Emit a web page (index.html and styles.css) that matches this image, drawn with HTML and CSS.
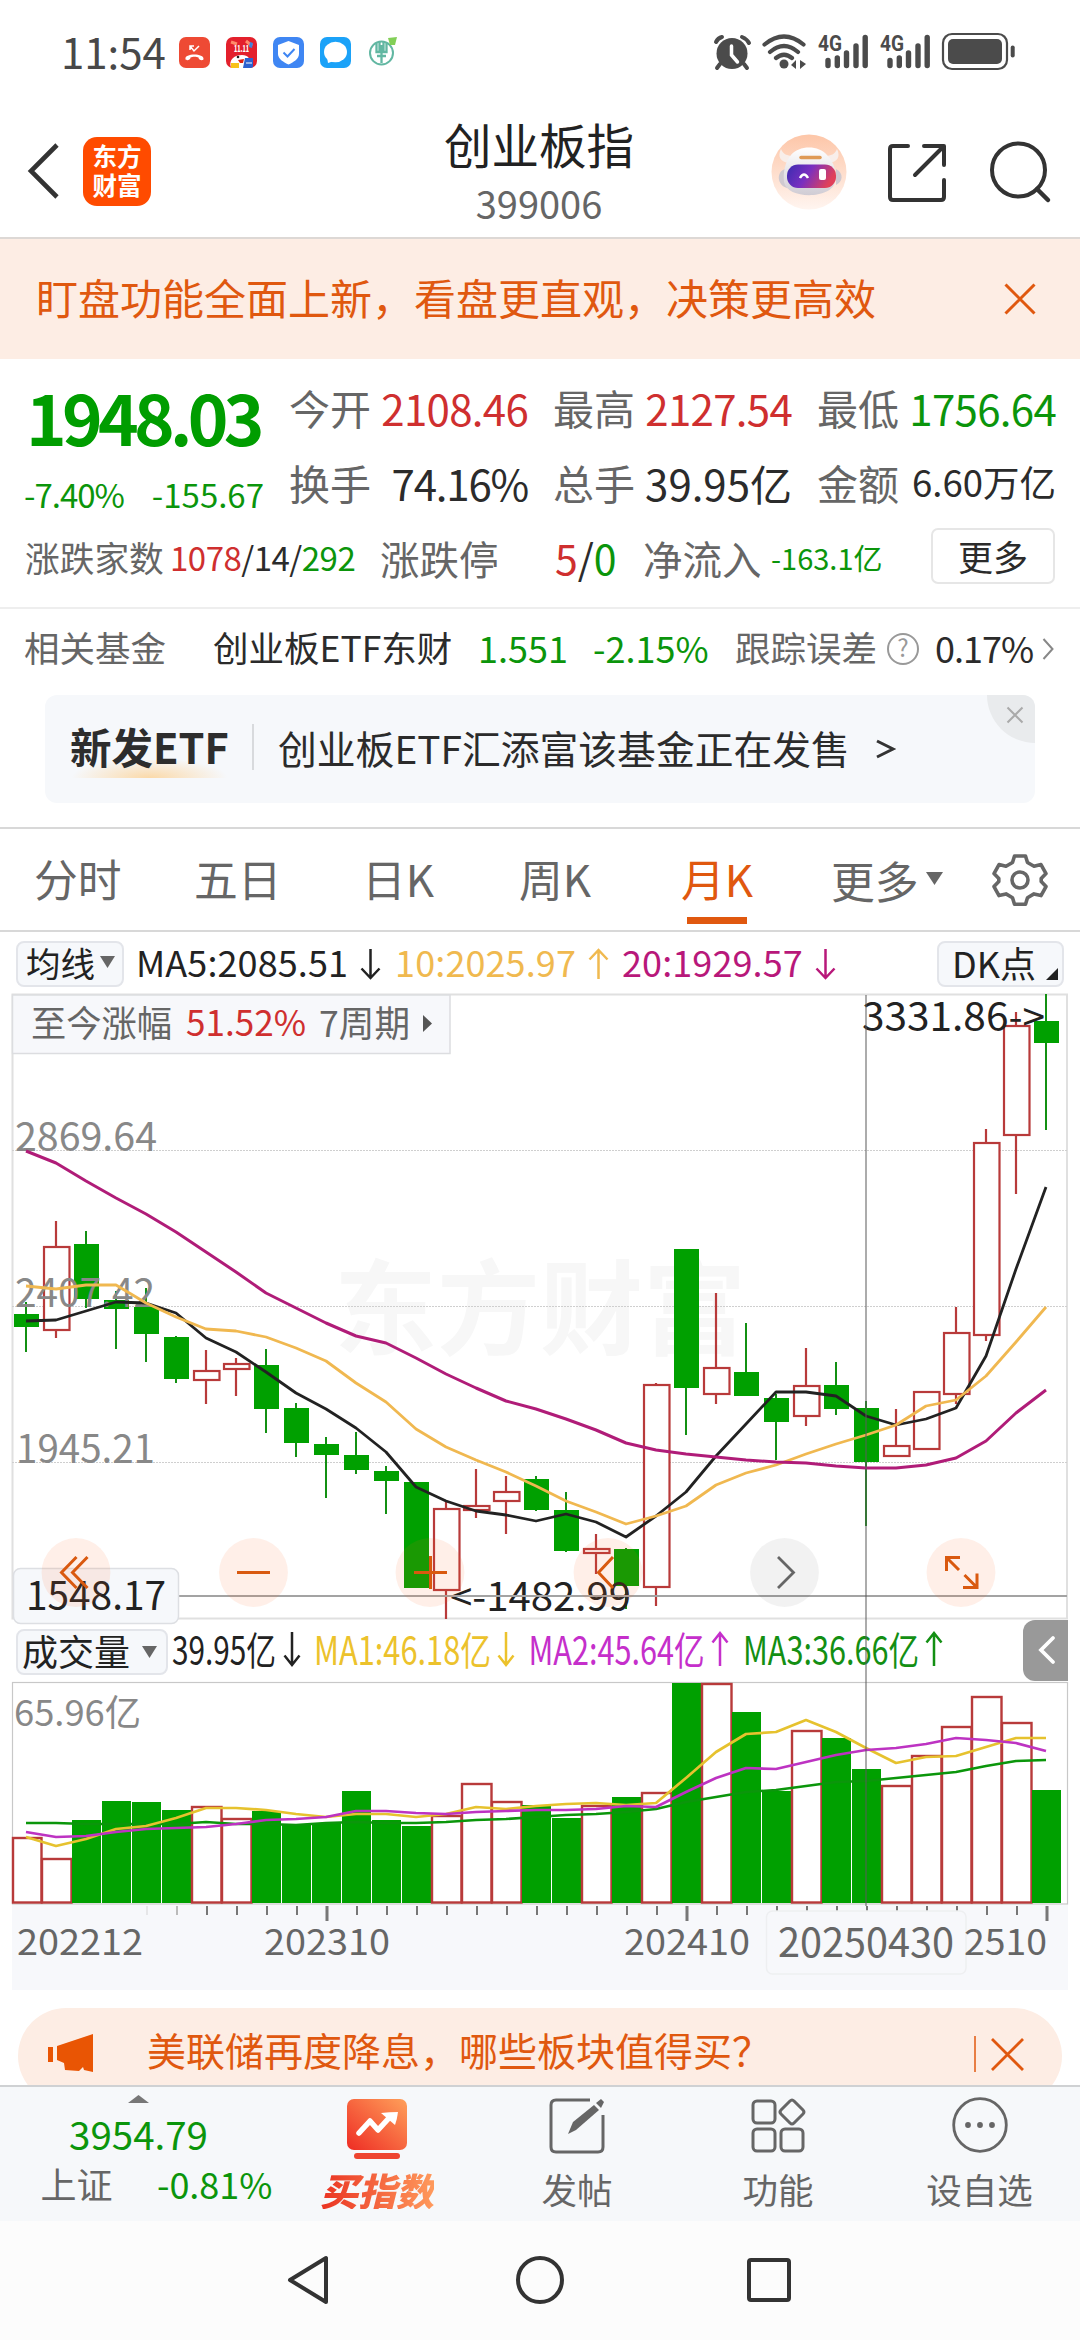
FILE: index.html
```html
<!DOCTYPE html>
<html lang="zh-CN">
<head>
<meta charset="utf-8">
<title>创业板指 399006</title>
<link rel="stylesheet" href="styles.css">
</head>
<body>
<div class="phone">
  <div class="statusbar">
    <span class="clock">11:54</span>
    <div class="apps">
      <svg width="31" height="31" viewBox="0 0 31 31"><rect width="31" height="31" rx="7" fill="#ee4a34"/><path d="M6.500 22c-1.500-6 19-6 18 0 0 2-5 1.500-5-1.500-2-1-6-1-8 0 0 3-5 3.500-5 1.500z" fill="#fff"/><path d="M11 13V9h4M11 9l4 5 5-5" fill="none" stroke="#fff" stroke-width="1.500"/></svg>
      <svg width="31" height="31" viewBox="0 0 31 31"><rect width="31" height="31" rx="7" fill="#e3202c"/><path d="M5 5l6 2M20 4l6 5" stroke="#ff8a6a" stroke-width="3"/><path d="M5 31c-3-9 4-13 11-13 6 0 9 3 8 13z" fill="#fff"/><text class="tiny" x="8" y="15" textLength="15" lengthAdjust="spacingAndGlyphs">11.11</text><path d="M24 5l3 1-1 5-3-1z" fill="#3f82dd"/><circle cx="12" cy="20" r="1.300" fill="#222"/><path d="M12 23l6-1-1 4h-3z" fill="#d21"/><path d="M5 26h8v5H5z" fill="#f8c21a"/><path d="M19 21h8v9l-2 1h-8z" fill="#2c62cf"/><path d="M20 26h6" stroke="#fff"/></svg>
      <svg width="31" height="31" viewBox="0 0 31 31"><rect width="31" height="31" rx="7" fill="#3f86f3"/><path d="M15.500 4L26 8v9c0 5-6 8.500-10.500 10.500C11 25.500 5 22 5 17V8z" fill="#fff"/><path d="M10.500 15.500l4 4 7-7.500" fill="none" stroke="#3f86f3" stroke-width="2"/></svg>
      <svg width="31" height="31" viewBox="0 0 31 31"><rect width="31" height="31" rx="7" fill="#1ba2f8"/><ellipse cx="15.500" cy="15" rx="11.500" ry="10.300" fill="#fff"/><path d="M7 20l1 6 6-2z" fill="#fff"/></svg>
      <svg width="31" height="31" viewBox="0 0 31 31"><circle cx="14.500" cy="16" r="11.500" fill="none" stroke="#62b7a2" stroke-width="2"/><path d="M9.500 6v9h3V5M19.500 6v9h-3V5M14.500 8v18M10 19h9" fill="none" stroke="#62b7a2" stroke-width="2.300"/><path d="M21 1l9-1-2 8-5 0z" fill="#82cf57"/></svg>
    </div>
    <svg class="sys" width="304" height="40" viewBox="712 32 304 40">
      <g fill="#4b4b4b"><circle cx="732" cy="53.500" r="15.500"/><path d="M720 64l-3 4M744 64l3 4M716 42q2-4 6-5M742 37q5 2 7 6" stroke="#4b4b4b" stroke-width="4" stroke-linecap="round" fill="none"/><path d="M731.500 46v9l6 7" stroke="#fff" stroke-width="3.500" stroke-linecap="round" fill="none"/></g>
      <g fill="none" stroke="#4b4b4b" stroke-width="4.200" stroke-linecap="round"><path d="M764.500 44.500q19.500-16 39 0M770 52q14-12 28 0M776 58q8-6.500 16 0"/></g>
      <circle cx="784" cy="64" r="4.500" fill="#4b4b4b"/><path d="M791 65l5-5v9M800 60v9l6-5z" fill="#4b4b4b"/>
      <text class="net" x="818" y="51" textLength="24" lengthAdjust="spacingAndGlyphs">4G</text>
      <text class="net" x="880" y="51" textLength="24" lengthAdjust="spacingAndGlyphs">4G</text>
      <g stroke="#4b4b4b" stroke-width="5.400" stroke-linecap="round"><path d="M828 60.500v5M837.300 58v7.500M846.500 53v12.500M856 46v19.500M865.200 37.500v28"/><path d="M890 60.500v5M899.300 58v7.500M908.500 53v12.500M918 46v19.500M927.200 37.500v28"/></g>
      <rect x="943" y="34" width="64" height="35" rx="9" fill="none" stroke="#4b4b4b" stroke-width="2.200"/><rect x="948" y="39" width="54" height="25" rx="5" fill="#4b4b4b"/><path d="M1012.700 47.500v8" stroke="#4b4b4b" stroke-width="4" stroke-linecap="round"/>
    </svg>
  </div>

  <header class="header">
    <div class="left">
      <svg width="32" height="56" viewBox="0 0 32 56"><path d="M29 2L3 28l26 26" fill="none" stroke="#333" stroke-width="4.600"/></svg>
      <div class="logo"><span>东方</span><span>财富</span></div>
    </div>
    <div class="heading"><h1>创业板指</h1><p>399006</p></div>
    <div class="tools">
      <svg width="76" height="76" viewBox="0 0 76 76">
        <defs><linearGradient id="halo" x2="0" y2="1"><stop stop-color="#fdc6a8"/><stop offset="1" stop-color="#fff5f0"/></linearGradient><linearGradient id="visor" x2="1" y2=".3"><stop stop-color="#3a2bb0"/><stop offset=".5" stop-color="#7a2fc0"/><stop offset="1" stop-color="#e0405a"/></linearGradient><linearGradient id="shell" x2="0" y2="1"><stop stop-color="#fff"/><stop offset="1" stop-color="#d0ccd4"/></linearGradient></defs>
        <circle cx="38" cy="38" r="37.500" fill="url(#halo)"/>
        <path d="M10 15c-4 8 0 13 8 14l4-7c-6 0-10-2-12-7zM66 15c4 8 0 13-8 14l-4-7c6 0 10-2 12-7z" fill="#f8eeea"/>
        <path d="M14 35c-9 3-8 16 2 19zM65 35c8 4 7 13 0 16z" fill="#cfc9d0"/>
        <path d="M20 21c8-10 28-10 36 0 7 7 10 17 8 27-3 17-48 18-51 0-1-10 1-20 7-27z" fill="url(#shell)"/>
        <rect x="16" y="30.500" width="49" height="23.500" rx="11" fill="url(#visor)"/>
        <path d="M29 44q4-7 8 0" fill="none" stroke="#fff" stroke-width="2.500"/><rect x="48" y="35" width="7" height="11" rx="2" fill="#fff"/><path d="M30 23.500h19" stroke="#df9a56" stroke-width="3.500" stroke-linecap="round" fill="none"/>
      </svg>
      <svg class="share" width="60" height="60" viewBox="0 0 60 60"><path d="M21 3H6Q3 3 3 6v48q0 3 3 3h48q3 0 3-3V37M37 3h20v19M56 4L28 32" fill="none" stroke="#333" stroke-width="4" stroke-linecap="round" stroke-linejoin="round"/></svg>
      <svg width="62" height="62" viewBox="0 0 62 62"><circle cx="28.500" cy="29" r="26.500" fill="none" stroke="#333" stroke-width="4"/><path d="M47 48l11 11" stroke="#333" stroke-width="4.500" stroke-linecap="round"/></svg>
    </div>
  </header>

  <div class="notice"><span>盯盘功能全面上新，看盘更直观，决策更高效</span>
    <svg width="32" height="32" viewBox="0 0 32 32"><path d="M1.500 1.500l29 29m0-29l-29 29" stroke="#e0580f" stroke-width="3"/></svg></div>

  <section class="quote">
    <div class="last"><strong>1948.03</strong><div class="chg"><span>-7.40%</span><span>-155.67</span></div></div>
    <div class="cell"><label>今开</label><b class="up">2108.46</b></div>
    <div class="cell"><label>最高</label><b class="up">2127.54</b></div>
    <div class="cell"><label>最低</label><b class="down">1756.64</b></div>
    <div class="cell"><label>换手</label><b class="turn">74.16%</b></div>
    <div class="cell"><label>总手</label><b>39.95亿</b></div>
    <div class="cell"><label>金额</label><b class="amt">6.60万亿</b></div>
    <div class="breadth">
      <label class="sm">涨跌家数</label><span class="cnt"><i class="up">1078</i>/14/<i class="down">292</i></span>
      <label>涨跌停</label><span class="lim"><i class="up">5</i>/<i class="down">0</i></span>
      <label>净流入</label><span class="flow">-163.1亿</span>
      <button class="more">更多</button>
    </div>
  </section>

  <div class="fund">
    <span class="grey">相关基金</span><span>创业板ETF东财</span><span class="down num">1.551</span><span class="down num">-2.15%</span><span class="grey">跟踪误差</span>
    <svg width="34" height="34" viewBox="0 0 34 34"><circle cx="17" cy="17" r="15" fill="none" stroke="#999" stroke-width="2"/><text class="q" x="17" y="25">?</text></svg>
    <span class="num err">0.17%</span>
    <svg width="12" height="24" viewBox="0 0 12 24"><path d="M1.500 2l9 10-9 10" fill="none" stroke="#888" stroke-width="2"/></svg>
  </div>

  <div class="promo">
    <strong>新发ETF</strong><span class="txt">创业板ETF汇添富该基金正在发售</span>
    <svg width="20" height="22" viewBox="0 0 20 22"><path d="M1 3l16 8-16 8" fill="none" stroke="#333" stroke-width="3"/></svg>
    <svg class="corner" width="48" height="48" viewBox="0 0 48 48"><circle cx="48" cy="0" r="48" fill="#e9ebed"/><path d="M20.500 12.500l15 15m0-15l-15 15" stroke="#aaa" stroke-width="2"/></svg>
  </div>

  <nav class="tabs">
    <span>分时</span><span>五日</span><span>日K</span><span>周K</span><span class="on">月K</span><span class="menu">更多<svg width="17" height="13" viewBox="0 0 17 13"><path d="M0 0h17l-8.500 13z" fill="#666"/></svg></span>
    <svg class="gear" width="54" height="54" viewBox="-27 -27 54 54"><path d="M-5.500-24h11l2 6.500 6.500 3.800 7-1.700 5 9-4.800 5v3l4.800 5-5 9-7-1.700-6.500 3.800-2 6.500h-11l-2-6.500-6.500-3.800-7 1.700-5-9 4.800-5v-3l-4.800-5 5-9 7 1.700 6.500-3.800z" fill="none" stroke="#666" stroke-width="3.600" stroke-linejoin="round"/><circle r="8" fill="none" stroke="#666" stroke-width="3.600"/></svg>
  </nav>

  <div class="ma">
    <span class="chip avg">均线<svg width="15" height="12" viewBox="0 0 15 12"><path d="M0 0h15L7.500 12z" fill="#666"/></svg></span>
    <span class="val">MA5:2085.51</span><svg width="21" height="32" viewBox="0 0 21 32"><path d="M10.500 1v29M1.500 20.500l9 9.500 9-9.500" fill="none" stroke="#222" stroke-width="2.500"/></svg>
    <span class="val y">10:2025.97</span><svg width="21" height="32" viewBox="0 0 21 32"><path d="M10.500 31V2M1.500 11.500l9-9.500 9 9.500" fill="none" stroke="#f0b94f" stroke-width="2.500"/></svg>
    <span class="val m">20:1929.57</span><svg width="21" height="32" viewBox="0 0 21 32"><path d="M10.500 1v29M1.500 20.500l9 9.500 9-9.500" fill="none" stroke="#b8187a" stroke-width="2.500"/></svg>
    <span class="chip dk"><span>DK点</span><svg width="12" height="12" viewBox="0 0 12 12"><path d="M12 0v12H0z" fill="#222"/></svg></span>
  </div>

  <section class="chart">
    <svg id="price" width="1080" height="636" viewBox="0 990 1080 636"></svg>
    <div class="vol">
      <span class="chip">成交量<svg width="15" height="12" viewBox="0 0 15 12"><path d="M0 0h15L7.500 12z" fill="#666"/></svg></span>
      <svg width="880" height="52" viewBox="168 1625 880 52">
        <g class="vt"><text x="172" y="1666" textLength="104" lengthAdjust="spacingAndGlyphs" fill="#222">39.95亿</text>
        <text x="314" y="1666" textLength="177" lengthAdjust="spacingAndGlyphs" fill="#ecc22c">MA1:46.18亿</text>
        <text x="528.500" y="1666" textLength="176" lengthAdjust="spacingAndGlyphs" fill="#c52fcb">MA2:45.64亿</text>
        <text x="743" y="1666" textLength="176" lengthAdjust="spacingAndGlyphs" fill="#138f13">MA3:36.66亿</text></g>
        <g fill="none" stroke-width="2.500"><path d="M292 1633v33M284.500 1656.500l7.500 9.500 7.500-9.500" stroke="#222"/><path d="M506 1633v33M498.500 1656.500l7.500 9.500 7.500-9.500" stroke="#ecc22c"/><path d="M720 1667v-33M712.500 1643.500l7.500-9.500 7.500 9.500" stroke="#c52fcb"/><path d="M934 1667v-33M926.500 1643.500l7.500-9.500 7.500 9.500" stroke="#138f13"/></g>
      </svg>
    </div>
    <svg id="volume" width="1080" height="315" viewBox="0 1678 1080 315"></svg>
    <div class="cross"></div>
    <div class="handle"><svg width="18" height="30" viewBox="0 0 18 30"><path d="M15 3L3 15l12 12" fill="none" stroke="#fff" stroke-width="3.800" stroke-linecap="round"/></svg></div>
  </section>

  <div class="ticker"><div class="pill">
    <svg width="46" height="40" viewBox="0 0 46 40"><path d="M0 14h5v15H0zM9 13L45 1v38l-9-2-1-3-4 4-14-1-1-7-7-3z" fill="#e95504"/></svg>
    <span>美联储再度降息，哪些板块值得买？</span>
    <svg class="px" width="50" height="38" viewBox="0 0 50 38"><path d="M1 1v36" stroke="#e0580f" stroke-width="1.500"/><path d="M18 4l31 31m0-31L18 35" stroke="#e0580f" stroke-width="2.800"/></svg>
  </div></div>

  <footer class="bottom">
    <div class="idx"><svg width="21" height="8" viewBox="0 0 21 8"><path d="M0 8L10.500 0 21 8z" fill="#777"/></svg><b>3954.79</b><div><span>上证</span><i>-0.81%</i></div></div>
    <div class="act buy"><svg width="60" height="62" viewBox="0 0 60 62"><defs><linearGradient id="org" x1="0" y1="1" x2="1" y2="0"><stop stop-color="#ee2c24"/><stop offset="1" stop-color="#ffa05a"/></linearGradient></defs><rect x="0" y="1" width="60" height="51" rx="7" fill="url(#org)"/><rect x="7" y="55" width="46" height="6" rx="3" fill="#ee4530"/><path d="M12 35l11-12 8 9 11-12" fill="none" stroke="#fff" stroke-width="5.500" stroke-linecap="round" stroke-linejoin="round"/><path d="M34 15q8-1 17-1-1 8-3 13z" fill="#fff"/></svg><span>买指数</span></div>
    <div class="act"><svg width="56" height="62" viewBox="0 0 56 62"><g fill="none" stroke="#666" stroke-width="3"><path d="M41 2H7Q2 2 2 7v42q0 5 5 5h42q5 0 5-5V17"/></g><path d="M19 36l5-12L45 7l5 5-23 20z" fill="#666"/><path d="M47 5l5-4 3 3-3 6z" fill="#666"/></svg><span>发帖</span></div>
    <div class="act"><svg width="54" height="62" viewBox="0 0 54 62"><g fill="none" stroke="#666" stroke-width="3"><rect x="2" y="3" width="22" height="22" rx="4"/><rect x="2" y="31" width="22" height="22" rx="4"/><rect x="30" y="31" width="22" height="22" rx="4"/><path d="M39 3q2-2 4 0l9 9q2 2 0 4l-9 9q-2 2-4 0l-9-9q-2-2 0-4z"/></g></svg><span>功能</span></div>
    <div class="act"><svg width="58" height="62" viewBox="0 0 58 62"><circle cx="29" cy="27" r="26.300" fill="none" stroke="#666" stroke-width="2.800"/><g fill="#666"><circle cx="17" cy="27" r="2.900"/><circle cx="29" cy="27" r="2.900"/><circle cx="41" cy="27" r="2.900"/></g></svg><span>设自选</span></div>
  </footer>

  <div class="sysnav">
    <svg width="44" height="52" viewBox="0 0 44 52"><path d="M40 4v44L4 26z" fill="none" stroke="#333" stroke-width="4" stroke-linejoin="round"/></svg>
    <svg width="50" height="50" viewBox="0 0 50 50"><circle cx="25" cy="25" r="22" fill="none" stroke="#333" stroke-width="4"/></svg>
    <svg width="46" height="46" viewBox="0 0 46 46"><rect x="3" y="3" width="40" height="40" rx="2" fill="none" stroke="#333" stroke-width="4"/></svg>
  </div>
</div>
<script src="chart.js"></script>
</body>
</html>
```
FILE: styles.css
```css
* { box-sizing: border-box; }
body { margin: 0; background: #fff; font-family: "Noto Sans CJK SC", "Noto Sans", sans-serif; color: #2b2b2b; }
svg { display: block; flex: none; overflow: visible; }
i, b { font-style: normal; font-weight: 400; }
.phone { width: 1080px; height: 2340px; overflow: hidden; display: flex; flex-direction: column; line-height: 1; white-space: nowrap; }
.phone > * { flex: none; }
.up { color: #cf2f2f; }
.down { color: #0b950b; }
.grey { color: #666; }

.statusbar { height: 105px; display: flex; padding: 32px 64px 0 61px; color: #484848; }
.clock { font-size: 42px; width: 118px; line-height: 38px; }
.apps { display: flex; gap: 16px; padding-top: 5px; }
.sys { margin-left: auto; }
.tiny { font-size: 9px; font-weight: 900; fill: #fff; }
.net { font: 700 22px Roboto, sans-serif; fill: #4b4b4b; }

.header { height: 134px; border-bottom: 2px solid #ddd8d5; display: grid; grid-template-columns: 360px 358px 1fr; }
.left { display: flex; align-items: flex-start; padding: 38px 0 0 28px; }
.left svg { margin-right: 23px; }
.logo { width: 68px; height: 69px; margin-top: -6px; border-radius: 14px; background: #ff4b00; color: #fff; font-size: 24.500px; line-height: 29px; font-weight: 700; display: flex; flex-direction: column; align-items: center; padding-top: 4px; }
.heading { text-align: center; }
.heading h1 { margin: 0; font-size: 47.500px; font-weight: 400; line-height: 78px; color: #222; }
.heading p { margin: 1px 0 0; font-size: 38px; line-height: 38px; color: #666; }
.tools { display: flex; padding: 29px 27px 0 53px; }
.share { margin: 9px 43px 0 40px; }
.tools svg:last-child { margin-top: 7px; }

.notice { height: 120px; background: #fdede4; color: #e0580f; font-size: 42px; padding: 0 44px 0 36px; display: flex; align-items: center; justify-content: space-between; }
.notice span { margin-top: -5px; }

.quote { height: 250px; padding: 11px 24px 0 26px; border-bottom: 2px solid #eee; display: grid; grid-template-columns: 238px 239px 239px 239px; grid-template-rows: 75px 75px 75px; column-gap: 25px; }
.last { grid-row: span 2; color: #0b950b; }
.last strong { display: block; color: #009d00; font-size: 69px; font-weight: 700; letter-spacing: -4.700px; line-height: 93px; }
.chg { display: flex; justify-content: space-between; margin-left: -2px; font-size: 33px; line-height: 62px; }
.chg span:first-child { letter-spacing: -1px; }
.cell { display: flex; justify-content: space-between; align-items: center; font-size: 42px; }
.cell label, .breadth label { color: #666; font-size: 41px; }
.cell .up, .cell .down { letter-spacing: -.7px; }
.cell .turn { letter-spacing: -1.200px; }
.cell .amt { font-size: 36.500px; }
.breadth { grid-column: 1 / -1; display: grid; grid-template-columns: 145px 210px 175px 88px 128px 160px 124px; align-items: center; margin-left: -1px; }
.breadth label { font-size: 39.500px; }
.breadth .sm { font-size: 34.700px; }
.cnt { font-size: 33px; letter-spacing: -.5px; }
.lim { font-size: 41px; }
.flow { font-size: 29px; color: #0b950b; }
.more { height: 56px; padding: 0; border: 2px solid #e6e6e6; border-radius: 7px; background: #fff; font: 35px/48px "Noto Sans CJK SC", sans-serif; color: #2b2b2b; margin-top: -3px; }

.fund { height: 76px; display: grid; grid-template-columns: 189px 265px 115px 142px 151px 49px 107px 14px; align-items: center; padding-left: 24px; font-size: 35.500px; }
.fund .num { font-size: 36px; }
.fund .err { letter-spacing: -1px; }
.fund svg { margin-top: 4px; }
.q { font-size: 24px; fill: #999; text-anchor: middle; }

.promo { position: relative; height: 108px; margin: 10px 45px 24px; border-radius: 12px; background: #f6f8fb; overflow: hidden; display: flex; align-items: center; }
.promo strong { font-size: 41.500px; color: #2d2d2d; padding: 6px 0 10px; margin-left: 25px; width: 159px; background: radial-gradient(ellipse 78px 20px at 50% 100%, #fbd9a8, rgba(251, 217, 168, 0)) 0 100% / 100% 18px no-repeat; }
.txt { font-size: 38.800px; margin-left: 23px; padding-left: 24px; border-left: 2px solid #d8dadd; line-height: 46px; margin-right: 26px; margin-top: -5px; }
.corner { position: absolute; right: 0; top: 0; }

.tabs { height: 105px; border-top: 2px solid #d8d8d8; border-bottom: 2px solid #d8d8d8; display: grid; grid-template-columns: 160px 168px 157px 162px 150px 160px 56px; padding-left: 34px; font-size: 43.800px; line-height: 98px; color: #666; }
.tabs .on { color: #e0580f; }
.on { width: 74px; background: linear-gradient(#e0580f, #e0580f) 6px 88px / 60px 7px no-repeat; }
.menu { display: flex; align-items: center; gap: 7px; }
.menu svg { margin-top: -3px; }
.gear { margin: 24px 0 0 2px; }

.ma { height: 57px; padding: 7px 16px 0; display: flex; align-items: center; font-size: 36px; color: #222; }
.chip { height: 46px; border: 2px solid #e3e5ea; border-radius: 8px; background: #f6f8fb; display: flex; align-items: center; color: #222; line-height: 36px; padding-bottom: 4px; }
.avg { width: 108px; font-size: 34.500px; padding-left: 8px; gap: 5px; }
.ma > svg { margin: 0 13px 0 12px; }
.val { margin-top: -6px; letter-spacing: .1px; }
.avg + .val { margin-left: 12px; }
.y { color: #f0b94f; margin-left: 1px; }
.m { color: #b8187a; }
.dk { margin-left: auto; width: 127px; padding-left: 13px; }
.dk svg { margin: 24px 0 0 10px; }

.chart { position: relative; height: 1003px; }
.vol { height: 52px; display: flex; padding: 4px 0 0 16px; }
.vol .chip { width: 152px; padding-left: 4px; font-size: 36px; justify-content: space-between; padding-right: 9px; }
.vol .chip svg { margin-top: 4px; }
.vol > svg { margin-top: -5px; }
.vt { font-size: 39px; }
.cross { position: absolute; left: 865px; top: 6px; width: 2px; height: 911px; background: rgba(90, 90, 90, .5); }
.handle { position: absolute; left: 1023px; top: 631px; width: 45px; height: 61px; border-radius: 12px 0 0 12px; background: #999; padding: 15px 0 0 15px; }
.axis { font-size: 39px; fill: #888; }
.mark { font-size: 39px; fill: #222; }
.date { font-size: 36px; fill: #666; }
.water { font-size: 103px; font-weight: 700; fill: #f7f7f7; }

.ticker { height: 93px; overflow: hidden; padding: 16px 18px 0; }
.pill { height: 96px; border-radius: 48px; background: #fdede4; color: #e0580f; font-size: 39px; display: flex; align-items: flex-start; padding: 22px 38px 0 30px; }
.pill svg { margin-top: 3px; margin-right: 53px; }
.pill .px { margin: 5px 0 0 auto; }

.bottom { height: 136px; background: #f6f8fa; border-top: 2px solid #cfd1d3; display: grid; grid-template-columns: 277px 200px 200px 202px 201px; color: #666; }
.idx { color: #0b950b; display: flex; flex-direction: column; align-items: center; padding-top: 8px; }
.idx b { font-size: 38.500px; line-height: 46px; margin-top: 7px; }
.idx div { display: flex; width: 232px; margin: 4px 0 0 36px; justify-content: space-between; font-size: 36px; line-height: 46px; }
.idx div span { color: #666; }
.act { display: flex; flex-direction: column; align-items: center; padding-top: 11px; font-size: 35.500px; }
.act span { margin-top: 11px; }
.act.buy span { font-size: 38px; font-weight: 900; font-style: italic; background: linear-gradient(90deg, #ea3322, #ff9a5c); -webkit-background-clip: text; background-clip: text; color: transparent; }

.phone > .sysnav { flex: 1; background: #fcfcfc; display: flex; padding: 33px 0 0 286px; align-items: flex-start; }
.sysnav svg:nth-child(2) { margin: 1px 0 0 185px; }
.sysnav svg:nth-child(3) { margin: 3px 0 0 181px; }
```
FILE: chart.js
```javascript
const RED = '#b83a3a', GREEN = '#00a000';
const x = i => 26 + 30 * i;

// kind, body top, body bottom, wick top, wick bottom
const candles = [
  ['g',1315,1328,1303,1353],['r',1248,1331,1222,1339],['g',1245,1300,1232,1309],['g',1301,1310,1292,1350],
  ['g',1308,1335,1289,1363],['g',1338,1380,1337,1384],['r',1372,1381,1351,1405],['r',1365,1370,1359,1397],
  ['g',1366,1410,1350,1434],['g',1409,1444,1404,1458],['g',1445,1456,1438,1499],['g',1456,1471,1433,1475],
  ['g',1472,1482,1467,1515],['g',1483,1589,1483,1589],['r',1510,1591,1503,1620],['r',1507,1511,1470,1519],
  ['r',1493,1502,1477,1535],['g',1480,1511,1477,1512],['g',1511,1552,1493,1553],['r',1550,1554,1535,1575],
  ['g',1550,1587,1549,1610],['r',1386,1588,1384,1607],['g',1250,1389,1250,1436],['r',1369,1395,1294,1405],
  ['g',1373,1397,1324,1397],['g',1399,1423,1395,1461],['r',1387,1417,1349,1427],['g',1386,1410,1363,1416],
  ['g',1409,1463,1402,1527],['r',1447,1457,1410,1457],['r',1393,1450,1393,1450],['r',1334,1395,1308,1405],
  ['r',1144,1336,1130,1342],['r',1027,1136,1013,1195],['g',1022,1044,995,1131]
];
const ma5 = [1322,1321,1312,1303,1304,1314,1339,1353,1373,1394,1410,1429,1453,1488,1502,1512,1516,1522,1515,1523,1538,1517,1493,1457,1425,1393,1393,1397,1417,1426,1420,1409,1357,1270,1188];
const ma10 = [1287,1290,1286,1286,1304,1318,1330,1332,1338,1349,1362,1384,1403,1430,1448,1461,1473,1487,1502,1513,1525,1517,1507,1486,1474,1466,1455,1445,1436,1426,1407,1401,1377,1343,1308];
const ma20 = [1152,1164,1182,1199,1215,1233,1253,1273,1294,1309,1324,1337,1344,1359,1375,1389,1402,1410,1420,1431,1444,1451,1455,1458,1461,1463,1464,1467,1469,1469,1466,1459,1442,1414,1391];
const volTop = [1839,1860,1821,1802,1803,1811,1808,1820,1812,1826,1824,1792,1821,1827,1817,1785,1803,1806,1819,1807,1798,1794,1684,1685,1713,1792,1732,1739,1770,1787,1757,1728,1698,1724,1791];
const v1 = [1838,1847,1840,1830,1827,1819,1809,1809,1811,1815,1818,1815,1815,1818,1815,1808,1810,1807,1805,1804,1806,1804,1779,1753,1735,1733,1721,1733,1749,1764,1758,1757,1748,1739,1739];
const v2 = [1833,1838,1837,1833,1830,1829,1828,1825,1821,1820,1818,1812,1812,1814,1815,1813,1812,1811,1811,1810,1807,1808,1793,1779,1769,1770,1763,1756,1751,1749,1745,1739,1741,1744,1752];
const v3 = [1824,1824,1825,1825,1825,1825,1823,1825,1825,1826,1824,1823,1824,1824,1823,1821,1820,1818,1816,1815,1813,1810,1803,1798,1793,1791,1787,1783,1782,1779,1776,1773,1767,1762,1761];

const rect = (a, b, w, h, fill, stroke, sw, rx) =>
  `<rect x="${a}" y="${b}" width="${w}" height="${h}" fill="${fill}" stroke="${stroke || 'none'}" stroke-width="${sw || 0}" rx="${rx || 0}"/>`;
const path = (d, c, w, extra) => `<path d="${d}" fill="none" stroke="${c}" stroke-width="${w}" ${extra || ''}/>`;
const line = (ys, c, w) => path('M' + ys.map((y, i) => x(i) + ' ' + y).join('L'), c, w, 'stroke-linejoin="round"');
const text = (cls, a, b, len, s, extra) =>
  `<text class="${cls}" x="${a}" y="${b}" textLength="${len}" lengthAdjust="spacingAndGlyphs" ${extra || ''}>${s}</text>`;

// price pane
let p = text('water', 334, 1348, 412, '东方财富');
p += rect(12.5, 995.5, 1054.5, 624, 'none', '#e0e0e0', 2);
for (const y of [1151.5, 1307.5, 1463.5]) p += path(`M12 ${y}H1067`, '#cfcfcf', 1, 'stroke-dasharray="2 1"');
candles.forEach(([k, t, b, wt, wb], i) => {
  const c = x(i);
  if (k === 'g') {
    p += path(`M${c} ${wt}V${wb}`, '#139013', 2) + rect(c - 12, t, 25, b - t, GREEN);
  } else {
    p += path(`M${c} ${wt}V${t}M${c} ${b}V${wb}`, RED, 2.2) + rect(c - 12, t, 25.5, b - t, '#fff', RED, 2.2);
  }
});
p += text('axis', 15, 1152, 142, '2869.64') + text('axis', 15, 1308, 140, '2407.42') + text('axis', 16, 1464, 139, '1945.21');
p += line(ma5, '#222', 2.8) + line(ma10, '#f0b850', 2.8) + line(ma20, '#b01c78', 3);
p += rect(12.5, 996, 437.5, 58.5, '#f7f8fb', '#dcdde0', 1.5);
p += text('date', 31, 1038, 141, '至今涨幅') + text('date', 186, 1037, 120, '51.52%', 'style="fill:#cf2f2f"') + text('date', 319, 1038, 91, '7周期');
p += '<path d="M423 1016l9 8.500-9 8.500z" fill="#555"/>';
p += text('mark', 862, 1032, 183, '3331.86-&gt;') + text('mark', 450, 1611.500, 181, '&lt;-1482.99');
p += path('M178 1597H1067', '#a3a3a3', 2);
p += rect(13.5, 1569.5, 165, 55, '#f6f8fb', '#dddfe3', 1.5, 7) + text('mark', 26, 1611, 140, '1548.17');
[76, 253.5, 430, 608, 784.5, 961].forEach((c, i) => {
  p += `<circle cx="${c}" cy="1573.500" r="34.400" fill="${i === 4 ? 'rgba(0,0,0,.05)' : 'rgba(255,100,30,.1)'}"/>`;
});
p += path('M76.500 1558l-15 15.500 15 15.500M87.500 1558l-15 15.500 15 15.500M237 1573.500h33M414 1573.500h33M430.500 1557v33M613 1558l-14.500 15.500 14.500 15.500', '#d9590f', 3);
p += path('M778 1558l15.500 15.500-15.500 15.500', '#666', 2.8);
p += path('M960 1558.500h-13.500v13.500M947 1559l12 12M963 1588.500h14v-14M976.500 1588l-12-12', '#d9590f', 3);
document.getElementById('price').innerHTML = p;

// volume pane and date axis
let v = rect(12, 1906, 1056, 85, '#f7f8fb') + rect(12.5, 1683.5, 1055, 221.5, 'none', '#c8c8c8', 1.2);
v += text('date', 14, 1727, 127, '65.96亿', 'style="fill:#888"');
candles.forEach(([k], i) => {
  const t = volTop[i], l = 12 + 30 * i;
  v += k === 'g' && i > 0 ? rect(l, t, 29, 1904 - t, GREEN) : rect(i ? l : l + 1, t, i ? 29.5 : 28.5, 1903.5 - t, '#fff', RED, 2.4);
});
v += line(v3, '#0b960b', 2.6) + line(v1, '#e6c22e', 2.7) + line(v2, '#bd33c2', 2.7);
for (let i = 4; i < 35; i++) {
  const major = i % 12 === 10;
  v += path(`M${x(i) + 1} 1907v${major ? 15 : 9}`, i === 4 ? '#e6e6e8' : i === 5 ? '#bbb' : '#777', major ? 3 : 2);
}
v += rect(766.5, 1912, 199.5, 63, '#f7f8fb', '#eeeff1', 1.5, 6);
v += text('date', 17, 1955.500, 126, '202212') + text('date', 264, 1955.500, 126, '202310') + text('date', 624, 1955.500, 126, '202410') + text('date', 964, 1955.500, 83, '2510');
v += text('date', 778, 1957.500, 176, '20250430', 'style="font-size:40px"');
document.getElementById('volume').innerHTML = v;
```
